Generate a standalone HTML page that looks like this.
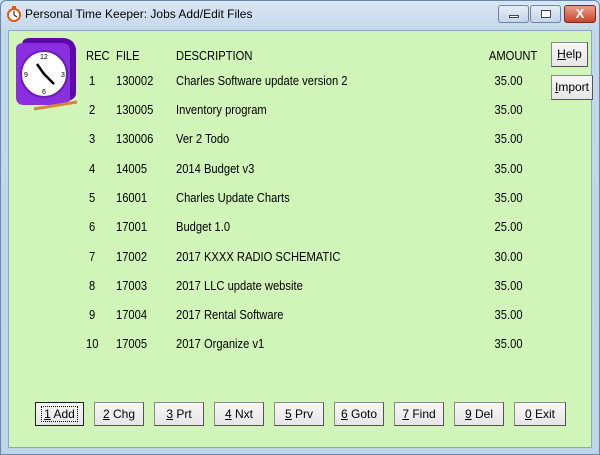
<!DOCTYPE html>
<html><head><style>
*{margin:0;padding:0;box-sizing:border-box}
body{width:600px;height:455px;overflow:hidden;background:#c9dcef;font-family:"Liberation Sans",sans-serif;font-size:12px;position:relative}
.frame{position:absolute;left:0;top:0;width:600px;height:455px;border:1px solid #6d87a6;border-radius:6px 6px 0 0;background:linear-gradient(#dbe7f4,#c3d7ec 30px,#c0d4ea)}
.title{position:absolute;left:25px;top:7px;font-size:12px;color:#000}
.client{position:absolute;left:8px;top:30px;width:584px;height:418px;background:#d1f5b9;border:1px solid #8fa6c0}
.t{position:absolute;white-space:nowrap;font-size:13px;transform:scaleX(0.86);transform-origin:left top}
.r{transform-origin:right top}
.btn{position:absolute;height:24px;background:linear-gradient(#f6f6f6,#e6e6e6);border:1px solid #8a8a8a;border-right-color:#555;border-bottom-color:#555;text-align:center;line-height:22px;font-size:12px}
.tb{position:absolute;top:5px;height:18px;border:1px solid #6e84a0;border-radius:3px;background:linear-gradient(#e6eef8,#c4d4e8)}
</style></head><body>
<div class="frame"></div>
<svg style="position:absolute;left:6px;top:6px" width="16" height="16"><circle cx="8" cy="9" r="6" fill="#fff" stroke="#e05a10" stroke-width="2"/><rect x="6" y="0" width="4" height="3" fill="#e05a10"/><path d="M8 9L8 5M8 9L11 11" stroke="#333" stroke-width="1.2"/></svg>
<div class="title">Personal Time Keeper: Jobs Add/Edit Files</div>
<div class="tb" style="left:498px;width:31px"><div style="position:absolute;left:10px;top:9px;width:10px;height:3px;background:#fff;border:1px solid #445"></div></div>
<div class="tb" style="left:530px;width:31px"><div style="position:absolute;left:10px;top:4px;width:10px;height:8px;border:1px solid #445;background:#fff"></div></div>
<div class="tb" style="left:564px;width:32px;background:linear-gradient(#eaa08c,#c8452c);border-color:#7a2a1c;color:#fff;font-weight:bold;text-align:center;line-height:16px;font-size:13px">X</div>
<div class="client">
<svg style="position:absolute;left:5px;top:6px" width="66" height="74">
<path d="M8 8 Q8 1 16 1 L48 1 Q60 1 62 12 L62 56 Q62 62 54 64 L16 68 Z" fill="#5a0aa8"/>
<path d="M2 12 Q2 6 10 6 L48 6 Q56 6 56 14 L56 60 Q56 68 48 68 L10 68 Q2 68 2 60Z" fill="#8a2ee0"/>
<circle cx="30" cy="37" r="23" fill="#fff" stroke="#6a1cbc" stroke-width="2"/>
<path d="M30 37L23 27M30 37L40 47" stroke="#000" stroke-width="2.5"/>
<text x="26" y="22" font-size="7">12</text><text x="47" y="40" font-size="7">3</text><text x="28" y="57" font-size="7">6</text><text x="10" y="40" font-size="7">9</text>
<path d="M20 72L63 65" stroke="#d08a30" stroke-width="3"/>
</svg>
<div class="t" style="left:77px;top:17px">REC</div><div class="t" style="left:107px;top:17px">FILE</div><div class="t" style="left:167px;top:17px">DESCRIPTION</div><div class="t r" style="right:54px;top:17px">AMOUNT</div>
<div class="t" style="left:80px;top:42px">1</div><div class="t" style="left:107px;top:42px">130002</div><div class="t" style="left:167px;top:42px">Charles Software update version 2</div><div class="t r" style="right:68px;top:42px">35.00</div>
<div class="t" style="left:80px;top:71px">2</div><div class="t" style="left:107px;top:71px">130005</div><div class="t" style="left:167px;top:71px">Inventory program</div><div class="t r" style="right:68px;top:71px">35.00</div>
<div class="t" style="left:80px;top:100px">3</div><div class="t" style="left:107px;top:100px">130006</div><div class="t" style="left:167px;top:100px">Ver 2 Todo</div><div class="t r" style="right:68px;top:100px">35.00</div>
<div class="t" style="left:80px;top:130px">4</div><div class="t" style="left:107px;top:130px">14005</div><div class="t" style="left:167px;top:130px">2014 Budget v3</div><div class="t r" style="right:68px;top:130px">35.00</div>
<div class="t" style="left:80px;top:159px">5</div><div class="t" style="left:107px;top:159px">16001</div><div class="t" style="left:167px;top:159px">Charles Update Charts</div><div class="t r" style="right:68px;top:159px">35.00</div>
<div class="t" style="left:80px;top:188px">6</div><div class="t" style="left:107px;top:188px">17001</div><div class="t" style="left:167px;top:188px">Budget 1.0</div><div class="t r" style="right:68px;top:188px">25.00</div>
<div class="t" style="left:80px;top:218px">7</div><div class="t" style="left:107px;top:218px">17002</div><div class="t" style="left:167px;top:218px">2017 KXXX RADIO SCHEMATIC</div><div class="t r" style="right:68px;top:218px">30.00</div>
<div class="t" style="left:80px;top:247px">8</div><div class="t" style="left:107px;top:247px">17003</div><div class="t" style="left:167px;top:247px">2017 LLC update website</div><div class="t r" style="right:68px;top:247px">35.00</div>
<div class="t" style="left:80px;top:276px">9</div><div class="t" style="left:107px;top:276px">17004</div><div class="t" style="left:167px;top:276px">2017 Rental Software</div><div class="t r" style="right:68px;top:276px">35.00</div>
<div class="t" style="left:77px;top:305px">10</div><div class="t" style="left:107px;top:305px">17005</div><div class="t" style="left:167px;top:305px">2017 Organize v1</div><div class="t r" style="right:68px;top:305px">35.00</div>
<div class="btn" style="left:542px;top:11px;width:37px;height:25px"><u>H</u>elp</div>
<div class="btn" style="left:542px;top:44px;width:42px;height:25px"><u>I</u>mport</div>
<div class="btn" style="left:26px;top:371px;width:49px;border:1px solid #222"><span style="outline:1px dotted #000;padding:0 2px"><u>1</u> Add</span></div>
<div class="btn" style="left:85px;top:371px;width:50px"><u>2</u> Chg</div>
<div class="btn" style="left:145px;top:371px;width:50px"><u>3</u> Prt</div>
<div class="btn" style="left:205px;top:371px;width:50px"><u>4</u> Nxt</div>
<div class="btn" style="left:265px;top:371px;width:50px"><u>5</u> Prv</div>
<div class="btn" style="left:325px;top:371px;width:50px"><u>6</u> Goto</div>
<div class="btn" style="left:385px;top:371px;width:50px"><u>7</u> Find</div>
<div class="btn" style="left:445px;top:371px;width:50px"><u>9</u> Del</div>
<div class="btn" style="left:505px;top:371px;width:52px"><u>0</u> Exit</div>
</div>
</body></html>
